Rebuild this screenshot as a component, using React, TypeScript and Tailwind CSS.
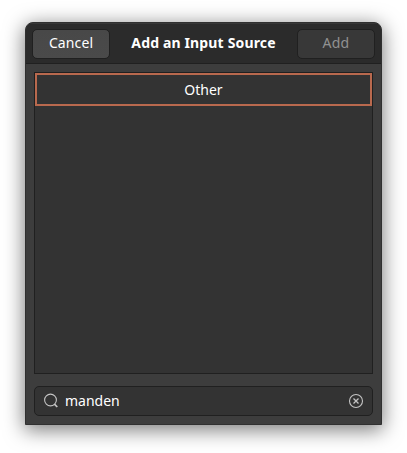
import React from 'react';

function SearchIcon() {
  return (
    <svg width="16" height="16" viewBox="0 0 16 16" fill="none" stroke="#c4c4c4" className="shrink-0">
      <circle cx="7.5" cy="7" r="5.9" strokeWidth="1.1" />
      <path d="M11.4 11.2 14.3 14" strokeWidth="1.7" />
    </svg>
  );
}

function ClearIcon() {
  return (
    <svg width="16" height="16" viewBox="0 0 16 16" fill="none" stroke="#c4c4c4" className="shrink-0">
      <circle cx="8" cy="8" r="6.5" strokeWidth="1.1" />
      <path d="M5.5 5.5 10.5 10.5M10.5 5.5 5.5 10.5" strokeWidth="1.3" />
    </svg>
  );
}

export default function App() {
  return (
    <div className="h-[453px] w-[407px] overflow-hidden bg-white pt-[22px] pl-[25px] font-['Noto_Sans','Open_Sans',sans-serif] text-sm text-white">
      <div className="flex h-[403px] w-[357px] flex-col overflow-hidden rounded-t-[8px] border border-[#303030] bg-[#3d3d3d] shadow-[0_4px_20px_1px_rgba(0,0,0,0.52)]">
        <header className="flex h-[41px] shrink-0 items-center justify-between border-t border-b border-t-[#383838] border-b-[#202020] bg-[#2b2b2b] px-1.5">
          <button className="flex h-[30px] w-[78px] items-center justify-center rounded-[5px] border border-[#202020] bg-linear-to-b from-[#484848] to-[#4a4a4a] pb-0.5">
            <span className="whitespace-nowrap tracking-[0.1px]">Cancel</span>
          </button>
          <h1 className="pb-0.5 text-center text-sm font-bold whitespace-nowrap tracking-[0.15px]">Add an Input Source</h1>
          <button disabled className="flex h-[30px] w-[78px] items-center justify-center rounded-[5px] border border-[#202020] bg-[#383838] pb-0.5 tracking-[0.2px] text-[#919191]">
            Add
          </button>
        </header>
        <main className="flex flex-1 flex-col gap-3 px-2 pt-2 pb-2">
          <div className="h-[302px] border border-[#202020] bg-[#333333]">
            <div className="flex h-[33px] items-center justify-center border-2 border-[#b9694e]">Other</div>
          </div>
          <div className="flex h-[30px] items-center rounded-[5px] border border-[#202020] bg-[#333333] px-2">
            <SearchIcon />
            <span className="ml-1.5 flex-1">manden</span>
            <ClearIcon />
          </div>
        </main>
      </div>
    </div>
  );
}
